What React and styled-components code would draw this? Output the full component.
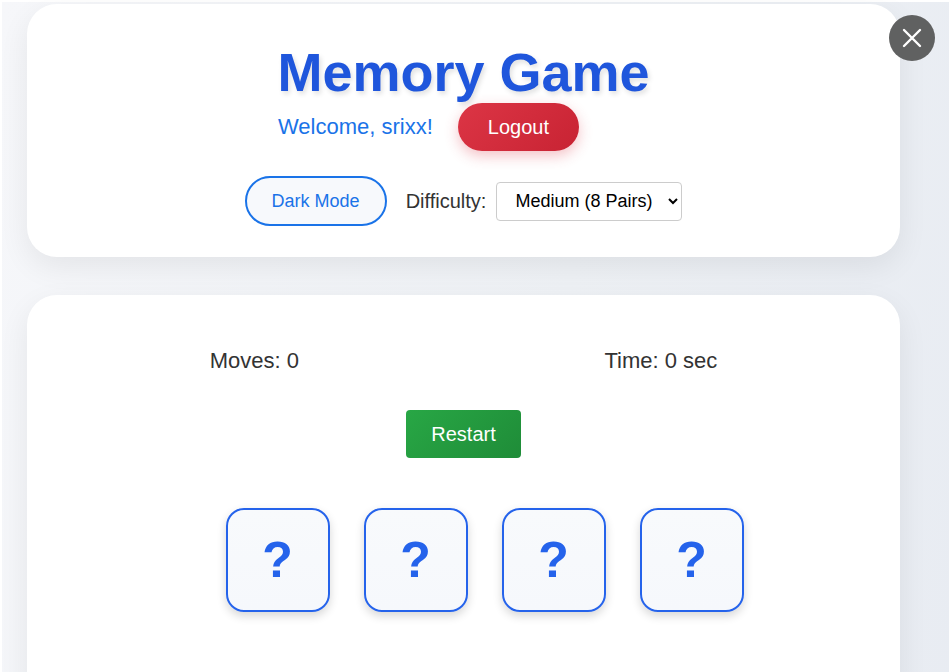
import React from 'react';
import styled, { createGlobalStyle } from 'styled-components';

const GlobalStyle = createGlobalStyle`
  html, body {
    margin: 0;
    padding: 0;
    background: #ffffff;
  }
  body {
    font-family: "Liberation Sans", Arial, sans-serif;
  }
  * {
    box-sizing: border-box;
  }
`;

const cards = Array.from({ length: 16 }, (_, i) => i);

const App = () => {
  return (
    <>
      <GlobalStyle />
      <Page>
        <HeaderCard>
          <Title>Memory Game</Title>
          <UserRow>
            <Welcome>Welcome, srixx!</Welcome>
            <LogoutButton type="button">Logout</LogoutButton>
          </UserRow>
          <ControlsRow>
            <ThemeButton type="button">Dark Mode</ThemeButton>
            <DifficultyLabel htmlFor="difficulty">
              Difficulty:
              <DifficultySelect id="difficulty" defaultValue="medium">
                <option value="easy">Easy (4 Pairs)</option>
                <option value="medium">Medium (8 Pairs)</option>
                <option value="hard">Hard (12 Pairs)</option>
              </DifficultySelect>
            </DifficultyLabel>
          </ControlsRow>
        </HeaderCard>

        <GameCard>
          <Stats>
            <span>Moves: 0</span>
            <span>Time: 0 sec</span>
          </Stats>
          <RestartButton type="button">Restart</RestartButton>
          <Board>
            {cards.map((id) => (
              <Tile key={id}>?</Tile>
            ))}
          </Board>
        </GameCard>
      </Page>

      <CloseButton type="button" aria-label="close">
        <svg width="22" height="22" viewBox="0 0 22 22" fill="none">
          <path d="M3 3 L19 19 M19 3 L3 19" stroke="#ffffff" strokeWidth="2.4" strokeLinecap="round" />
        </svg>
      </CloseButton>
    </>
  );
};

export default App;

const Page = styled.div`
  margin: 2px 0 0 2px;
  padding: 2px 49px 40px 25px;
  min-height: 1626px;
  background: linear-gradient(100deg, #f6f7fa 0%, #eef1f5 50%, #e6eaf1 100%);
`;

const HeaderCard = styled.header`
  display: flex;
  flex-direction: column;
  align-items: center;
  background: #ffffff;
  border-radius: 30px;
  padding: 37px 30px 31px;
  box-shadow: 0 10px 30px rgba(0, 0, 0, 0.07);
`;

const Title = styled.h1`
  margin: 0;
  font-size: 54px;
  line-height: 62px;
  font-weight: 700;
  color: #1f56dc;
  text-shadow: 2px 3px 5px rgba(0, 0, 0, 0.12);
`;

const UserRow = styled.div`
  display: flex;
  align-items: center;
  gap: 25px;
  margin-right: 70px;
`;

const Welcome = styled.span`
  font-size: 22px;
  color: #1a73e8;
`;

const LogoutButton = styled.button`
  height: 48px;
  padding: 0 30px;
  border: none;
  border-radius: 24px;
  background: linear-gradient(135deg, #dc3545 0%, #c82333 100%);
  color: #ffffff;
  font-family: inherit;
  font-size: 20px;
  box-shadow: 0 5px 14px rgba(220, 53, 69, 0.3);
  cursor: pointer;
`;

const ControlsRow = styled.div`
  display: flex;
  align-items: center;
  gap: 19px;
  margin-top: 25px;
`;

const ThemeButton = styled.button`
  height: 50px;
  padding: 0 25px;
  border: 2px solid #1a73e8;
  border-radius: 25px;
  background: #f7f9fc;
  color: #1a73e8;
  font-family: inherit;
  font-size: 18px;
  cursor: pointer;
`;

const DifficultyLabel = styled.label`
  display: flex;
  align-items: center;
  gap: 10px;
  font-size: 20px;
  color: #333333;
`;

const DifficultySelect = styled.select`
  width: 186px;
  height: 39px;
  padding: 0 8px 0 14px;
  border: 1px solid #cccccc;
  border-radius: 4px;
  background: #ffffff;
  color: #000000;
  font-family: inherit;
  font-size: 18px;
`;

const GameCard = styled.section`
  margin-top: 38px;
  background: #ffffff;
  border-radius: 30px;
  padding: 30px;
  box-shadow: 0 10px 30px rgba(0, 0, 0, 0.07);
`;

const Stats = styled.div`
  display: flex;
  justify-content: space-around;
  margin-top: 23px;
  font-size: 22px;
  line-height: 25px;
  color: #333333;
`;

const RestartButton = styled.button`
  display: block;
  margin: 37px auto 0;
  height: 48px;
  padding: 0 25px;
  border: none;
  border-radius: 4px;
  background: linear-gradient(135deg, #28a745 0%, #1f8c38 100%);
  color: #ffffff;
  font-family: inherit;
  font-size: 20px;
  cursor: pointer;
`;

const Board = styled.div`
  display: grid;
  grid-template-columns: repeat(4, 104px);
  column-gap: 34px;
  row-gap: 68px;
  justify-content: center;
  margin-top: 50px;
  padding-left: 42px;
`;

const Tile = styled.div`
  display: flex;
  align-items: center;
  justify-content: center;
  width: 104px;
  height: 104px;
  border: 2px solid #2563eb;
  border-radius: 18px;
  background: linear-gradient(180deg, #f8fafc 0%, #f6f8fc 100%);
  color: #2563eb;
  font-size: 50px;
  font-weight: 700;
  box-shadow: 0 4px 10px rgba(0, 0, 0, 0.16);
`;

const CloseButton = styled.button`
  position: fixed;
  top: 15px;
  right: 14px;
  width: 46px;
  height: 46px;
  display: flex;
  align-items: center;
  justify-content: center;
  padding: 0;
  border: none;
  border-radius: 50%;
  background: #606161;
  cursor: pointer;
`;
